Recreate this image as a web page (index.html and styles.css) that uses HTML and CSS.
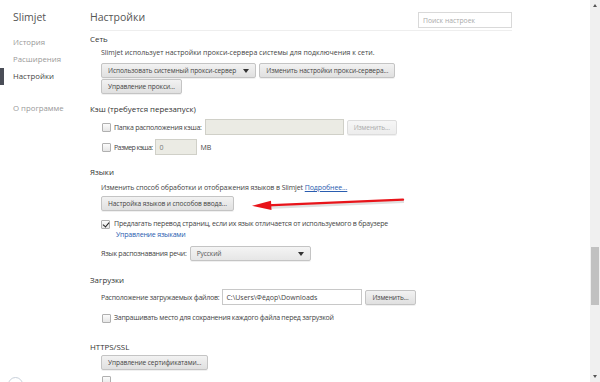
FILE: index.html
```html
<!DOCTYPE html>
<html lang="ru">
<head>
    <meta charset="UTF-8">
    <title>Настройки - Slimjet</title>
    <link rel="stylesheet" href="styles.css">
</head>
<body>
    <aside class="sidebar">
        <div class="brand">Slimjet</div>
        <nav class="nav">
            <a class="nav-item">История</a>
            <a class="nav-item">Расширения</a>
            <a class="nav-item active">Настройки</a>
            <a class="nav-item about">О программе</a>
        </nav>
        <div class="help-circle"></div>
    </aside>

    <main class="content">
        <header class="page-head">
            <h1>Настройки</h1>
            <input class="search" type="text" placeholder="Поиск настроек">
        </header>

        <section class="group">
            <h3>Сеть</h3>
            <div class="group-body">
                <p class="text">Slimjet использует настройки прокси-сервера системы для подключения к сети.</p>
                <div class="row row-proxy">
                    <button class="btn btn-select">Использовать системный прокси-сервер <span class="caret"></span></button>
                    <button class="btn">Изменить настройки прокси-сервера...</button>
                </div>
                <div class="row row-tight">
                    <button class="btn">Управление прокси...</button>
                </div>
            </div>
        </section>

        <section class="group group-cache">
            <h3>Кэш (требуется перезапуск)</h3>
            <div class="group-body">
                <div class="row row-cache">
                    <label class="check"><span class="box"></span>Папка расположения кэша:</label>
                    <input class="field field-cache" type="text" disabled>
                    <button class="btn" disabled>Изменить...</button>
                </div>
                <div class="row row-size">
                    <label class="check"><span class="box"></span>Размер кэша:</label>
                    <input class="field field-size" type="text" value="0" disabled>
                    <span class="unit">MB</span>
                </div>
            </div>
        </section>

        <section class="group group-lang">
            <h3>Языки</h3>
            <div class="group-body">
                <p class="text text-lang">Изменить способ обработки и отображения языков в Slimjet <a class="link underline">Подробнее...</a></p>
                <div class="row row-tight">
                    <button class="btn">Настройка языков и способов ввода...</button>
                </div>
                <div class="check-block">
                    <span class="box checked"></span>
                    <div>
                        <div>Предлагать перевод страниц, если их язык отличается от используемого в браузере</div>
                        <a class="link">Управление языками</a>
                    </div>
                </div>
                <div class="row row-speech">
                    <span class="label">Язык распознавания речи:</span>
                    <button class="btn btn-select select-speech">Русский <span class="caret"></span></button>
                </div>
            </div>
        </section>

        <section class="group group-downloads">
            <h3>Загрузки</h3>
            <div class="group-body">
                <div class="row row-dl">
                    <span class="label">Расположение загружаемых файлов:</span>
                    <input class="field field-dl" type="text" value="C:\Users\Фёдор\Downloads">
                    <button class="btn">Изменить...</button>
                </div>
                <div class="row row-ask">
                    <label class="check"><span class="box"></span>Запрашивать место для сохранения каждого файла перед загрузкой</label>
                </div>
            </div>
        </section>

        <section class="group group-ssl">
            <h3>HTTPS/SSL</h3>
            <div class="group-body">
                <div class="row row-tight">
                    <button class="btn">Управление сертификатами...</button>
                </div>
                <div class="row row-last">
                    <span class="box"></span>
                </div>
            </div>
        </section>
    </main>

    <div class="scrollbar">
        <span class="arrow up"></span>
        <span class="thumb"></span>
        <span class="arrow down"></span>
    </div>

    <svg class="annotation" width="170" height="20" viewBox="0 0 170 20">
        <line x1="15" y1="8.4" x2="151" y2="2.6" stroke="rgba(0,0,0,0.12)" stroke-width="3" transform="translate(1,2)"/>
        <line x1="15" y1="8.4" x2="151" y2="2.6" stroke="#e8141a" stroke-width="2.4" stroke-linecap="round"/>
        <polygon points="0,8.8 19,3.8 19.5,13" fill="#e8141a"/>
    </svg>
</body>
</html>
```

FILE: styles.css
```css
* {
    margin: 0;
    padding: 0;
    box-sizing: border-box;
}

body {
    font-family: 'Open Sans', 'Noto Sans', sans-serif;
    font-size: 7px;
    color: #444;
    background: #fff;
    width: 600px;
    height: 382px;
    overflow: hidden;
    display: flex;
    position: relative;
}

/* sidebar */
.sidebar {
    width: 90px;
    flex-shrink: 0;
    position: relative;
}

.brand {
    font-size: 10.5px;
    color: #555;
    padding: 8px 0 0 13px;
    line-height: 18px;
}

.nav {
    display: flex;
    flex-direction: column;
    margin-top: 8px;
    font-size: 7.8px;
}

.nav-item {
    display: block;
    line-height: 17px;
    color: #999;
    border-left: 4px solid transparent;
    padding-left: 9px;
}

.nav-item.active {
    color: #464646;
    border-left-color: #4a4d57;
}

.nav-item.about {
    margin-top: 15px;
}

.help-circle {
    position: absolute;
    left: 8px;
    top: 377px;
    width: 15px;
    height: 15px;
    border: 1px solid #c8d0da;
    border-radius: 50%;
}

/* main */
.content {
    width: 422px;
    flex-shrink: 0;
}

.page-head {
    height: 31px;
    border-bottom: 1px solid #eee;
    display: flex;
    justify-content: space-between;
    align-items: flex-start;
}

.page-head h1 {
    font-size: 10.5px;
    font-weight: normal;
    color: #555;
    line-height: 20px;
    padding-top: 7px;
}

.search {
    margin-top: 12px;
    width: 94px;
    height: 16px;
    border: 1px solid #d9d9d9;
    font-family: inherit;
    font-size: 6.8px;
    padding-left: 4px;
    color: #444;
}

.search::placeholder {
    color: #aaa;
}

.group h3 {
    font-size: 7.9px;
    font-weight: normal;
    color: #333;
    line-height: 14px;
    margin-top: 1px;
}

.group-cache h3 { margin-top: 8px; }
.group-lang h3 { margin-top: 10px; }
.group-downloads h3 { margin-top: 12px; }
.group-ssl h3 { margin-top: 15px; }

.group-body {
    padding-left: 11px;
}

.text {
    line-height: 14px;
}

.text-lang {
    margin-top: 2px;
    letter-spacing: -0.1px;
}

.link {
    color: #2a5db0;
}

.underline {
    text-decoration: underline;
}

.label,
.check {
    letter-spacing: -0.25px;
}

.row {
    display: flex;
    align-items: center;
    gap: 3px;
}

.row-proxy { margin-top: 3px; }
.row-tight { margin-top: 1px; }
.row-cache { margin-top: 3px; }
.row-size { margin-top: 4px; }
.row-size .check { letter-spacing: -0.6px; }
.row-speech { margin-top: 6px; }
.row-dl { margin-top: 2px; }
.row-ask { margin-top: 6px; line-height: 14px; }
.row-last { margin-top: 6px; padding-left: 1px; }

.btn {
    font-family: inherit;
    font-size: 6.6px;
    letter-spacing: -0.1px;
    color: #444;
    height: 15px;
    padding: 0 6px;
    border: 1px solid #c4c4c4;
    border-radius: 2px;
    background: linear-gradient(#f2f2f2, #e0e0e0);
    box-shadow: 0 1px 0 rgba(0, 0, 0, 0.06);
    display: inline-flex;
    align-items: center;
}

.btn:disabled {
    color: #aaa;
    border-color: #ddd;
    background: linear-gradient(#f6f6f6, #ededed);
}

.btn-select {
    gap: 7px;
    padding-right: 6px;
}

.caret {
    width: 0;
    height: 0;
    border-left: 3px solid transparent;
    border-right: 3px solid transparent;
    border-top: 4px solid #333;
}

.select-speech {
    width: 121px;
    justify-content: space-between;
    padding-left: 6px;
    color: #555;
    background: linear-gradient(#f4f4f4, #e6e6e6);
}

.check {
    display: flex;
    align-items: center;
    gap: 3px;
    padding-left: 1px;
}

.box {
    width: 9px;
    height: 9px;
    border: 1px solid #b0b0b0;
    border-radius: 1px;
    background: linear-gradient(#fbfbfb, #e6e6e6);
    flex-shrink: 0;
    position: relative;
}

.box.checked::after {
    content: "";
    position: absolute;
    left: 2px;
    top: 0;
    width: 3px;
    height: 5px;
    border-right: 1.5px solid #222;
    border-bottom: 1.5px solid #222;
    transform: rotate(40deg);
}

.field {
    font-family: inherit;
    font-size: 7px;
    color: #444;
    height: 16px;
    border: 1px solid #c8c8c8;
    padding-left: 3px;
    background: #fff;
}

.field:disabled {
    background: #ebebe4;
    border-color: #d0d0c8;
    color: #777;
}

.field-cache { width: 139px; }
.field-size { width: 42px; }
.field-dl { width: 140px; }

.check-block {
    display: flex;
    gap: 4px;
    margin-top: 7px;
    line-height: 11px;
    letter-spacing: -0.2px;
}

.check-block .box {
    margin-top: 2px;
}

.check-block .link {
    display: block;
    padding-left: 2px;
}

/* scrollbar */
.scrollbar {
    width: 10px;
    flex-shrink: 0;
    margin-left: 78px;
    background: #f0f0f0;
    position: relative;
}

.thumb {
    position: absolute;
    left: 1px;
    right: 1px;
    top: 247px;
    height: 58px;
    background: #c1c1c1;
}

.arrow {
    position: absolute;
    left: 3px;
    width: 0;
    height: 0;
    border-left: 2px solid transparent;
    border-right: 2px solid transparent;
}

.arrow.up {
    top: 4px;
    border-bottom: 3px solid #555;
}

.arrow.down {
    bottom: 4px;
    border-top: 3px solid #555;
}

.annotation {
    position: absolute;
    left: 252px;
    top: 197px;
}
```
